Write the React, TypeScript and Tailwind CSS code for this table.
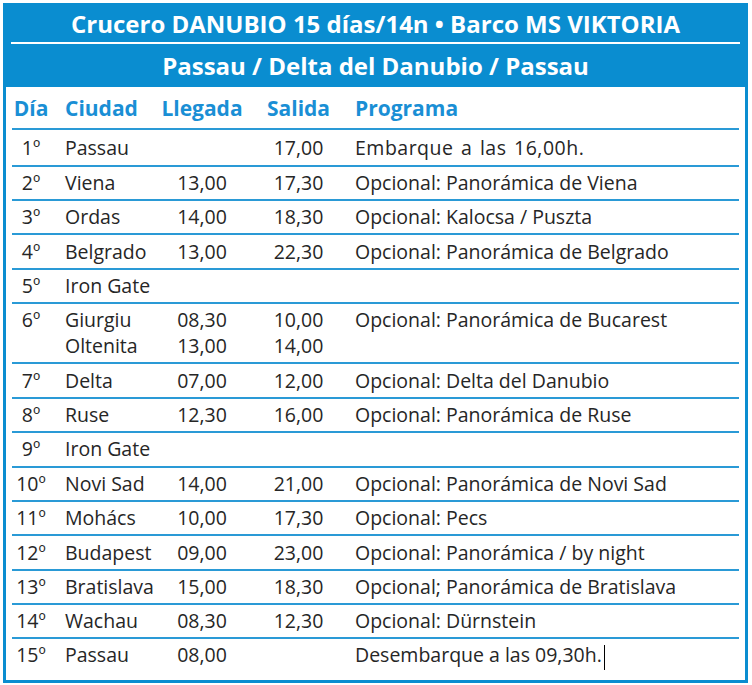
import React from "react";

type Row = { d: string; c: string[]; l: string[]; s: string[]; p: string };

const rows: Row[] = [
  { d: "1º", c: ["Passau"], l: [""], s: ["17,00"], p: "Embarque a las 16,00h." },
  { d: "2º", c: ["Viena"], l: ["13,00"], s: ["17,30"], p: "Opcional: Panorámica de Viena" },
  { d: "3º", c: ["Ordas"], l: ["14,00"], s: ["18,30"], p: "Opcional: Kalocsa / Puszta" },
  { d: "4º", c: ["Belgrado"], l: ["13,00"], s: ["22,30"], p: "Opcional: Panorámica de Belgrado" },
  { d: "5º", c: ["Iron Gate"], l: [""], s: [""], p: "" },
  { d: "6º", c: ["Giurgiu", "Oltenita"], l: ["08,30", "13,00"], s: ["10,00", "14,00"], p: "Opcional: Panorámica de Bucarest" },
  { d: "7º", c: ["Delta"], l: ["07,00"], s: ["12,00"], p: "Opcional: Delta del Danubio" },
  { d: "8º", c: ["Ruse"], l: ["12,30"], s: ["16,00"], p: "Opcional: Panorámica de Ruse" },
  { d: "9º", c: ["Iron Gate"], l: [""], s: [""], p: "" },
  { d: "10º", c: ["Novi Sad"], l: ["14,00"], s: ["21,00"], p: "Opcional: Panorámica de Novi Sad" },
  { d: "11º", c: ["Mohács"], l: ["10,00"], s: ["17,30"], p: "Opcional: Pecs" },
  { d: "12º", c: ["Budapest"], l: ["09,00"], s: ["23,00"], p: "Opcional: Panorámica / by night" },
  { d: "13º", c: ["Bratislava"], l: ["15,00"], s: ["18,30"], p: "Opcional; Panorámica de Bratislava" },
  { d: "14º", c: ["Wachau"], l: ["08,30"], s: ["12,30"], p: "Opcional: Dürnstein" },
  { d: "15º", c: ["Passau"], l: ["08,00"], s: [""], p: "Desembarque a las 09,30h." },
];

const grid = "grid grid-cols-[38px_111px_82px_111px_1fr]";

function Lines({ items, className }: { items: string[]; className?: string }) {
  return (
    <div className={className}>
      {items.map((t, i) => (
        <div key={i} className="h-[26px]">
          {t}
        </div>
      ))}
    </div>
  );
}

export default function App() {
  return (
    <div
      className="w-[752px] h-[685px] bg-white pt-[3px] pl-[3px]"
      style={{ fontFamily: "'Open Sans', Lato, sans-serif" }}
    >
      <div className="w-[745px] h-[680px] border-[3px] border-[#0a8dd0] flex flex-col">
        <div className="bg-[#0a8dd0] px-[5px]">
          <div className="h-[38px] flex items-center justify-center text-white font-bold text-[24px] border-b-2 border-white">
            Crucero DANUBIO 15 días/14n • Barco MS VIKTORIA
          </div>
          <div className="h-[43px] flex items-center justify-center text-white font-bold text-[24px]">
            Passau / Delta del Danubio / Passau
          </div>
        </div>
        <div className="px-[6px] flex-1 flex flex-col text-[19.5px] text-[#262626]">
          <div className={`${grid} h-[43px] items-center border-b-2 border-[#2a9ad6] text-[#1a8fd5] font-bold text-[21px] pt-[2px]`}>
            <div className="text-center">Día</div>
            <div className="pl-[15px]">Ciudad</div>
            <div className="text-center">Llegada</div>
            <div className="text-center">Salida</div>
            <div className="pl-[1px]">Programa</div>
          </div>
          {rows.map((r, i) => {
            const last = i === rows.length - 1;
            return (
              <div
                key={i}
                className={`${grid} leading-[26px] ${
                  last ? "pt-[3px]" : "border-b-2 border-[#2a9ad6] py-[3.2px]"
                } ${i === 0 ? "pt-[5.4px]" : ""}`}
              >
                <div className="text-center">{r.d}</div>
                <Lines items={r.c} className="pl-[15px]" />
                <Lines items={r.l} className="text-center" />
                <Lines items={r.s} className="text-center" />
                <div
                  className={`pl-[1px] whitespace-nowrap ${
                    i === 0 ? "tracking-[0.5px] [word-spacing:2px]" : ""
                  }`}
                >
                  {r.p}
                  {last && <span className="inline-block w-[1px] h-[25px] bg-black align-middle ml-[2px]" />}
                </div>
              </div>
            );
          })}
        </div>
      </div>
    </div>
  );
}
